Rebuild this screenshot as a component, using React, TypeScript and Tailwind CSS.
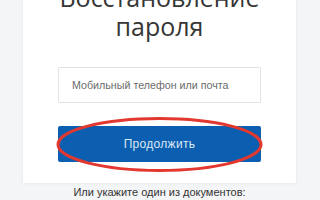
export default function App() {
  return (
    <div className="h-[200px] w-[320px] overflow-hidden bg-[#f4f5f6]">
      <div className="ml-[23px] h-full w-[273px] bg-white shadow-[0_0_3px_rgba(0,0,0,0.08)]">
        {/* Title */}
        <h1
          className="mt-[-17px] text-center text-[25px] leading-[29px] text-[#363636]"
          style={{ fontFamily: '"Open Sans", sans-serif' }}
        >
          Восстановление
          <br />
          пароля
        </h1>

        <div
          className="mx-[35px] mt-[26px]"
          style={{ fontFamily: '"Liberation Sans", Arial, sans-serif' }}
        >
          {/* Login field */}
          <input
            type="text"
            placeholder="Мобильный телефон или почта"
            className="block h-[36px] w-full rounded-[1px] border border-[#e3e3e3] bg-white px-[13px] text-[10.7px] text-[#333] placeholder:text-[#6b6b6b] focus:outline-none"
          />

          {/* Continue button with the red mark round it */}
          <div className="relative mt-[23px]">
            <button className="block h-[36px] w-full rounded-[2px] bg-[#0c5fb0] text-[12px] tracking-[0.3px] text-[#dce8f6]">
              Продолжить
            </button>
            <svg
              className="pointer-events-none absolute left-[-4px] top-[-12px]"
              width="212"
              height="60"
              viewBox="0 0 212 60"
              fill="none"
            >
              <ellipse
                cx="105.5"
                cy="30.5"
                rx="101.5"
                ry="26"
                stroke="#e2382f"
                strokeWidth="3"
              />
            </svg>
          </div>

          <p className="mt-[22px] text-center text-[11px] leading-[16px] text-[#333]">
            Или укажите один из документов:
          </p>
        </div>
      </div>
    </div>
  );
}
